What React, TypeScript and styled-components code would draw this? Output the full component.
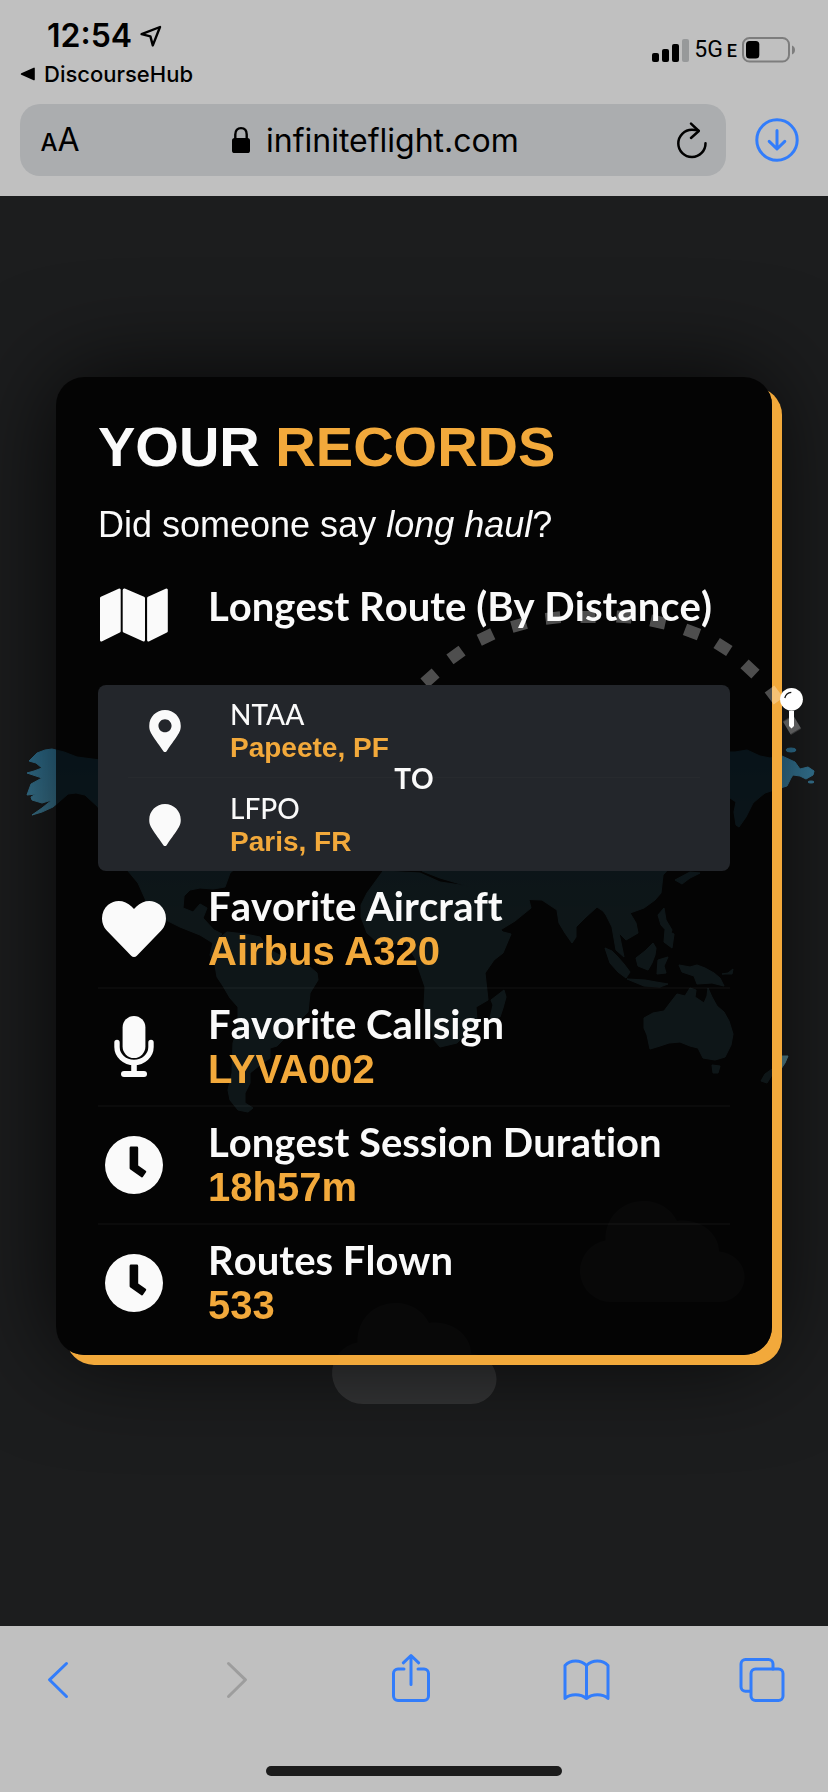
import React from "react";
import styled, { createGlobalStyle } from "styled-components";
import { FaHeart, FaMapMarker, FaMapMarkerAlt } from "react-icons/fa";

const color = {
  chrome: "#c0c0c0",
  field: "#abadaf",
  page: "#1c1d1e",
  accent: "#f2a93b",
  link: "#327dfb",
  text: "#fafafa",
  panel: "#23262b",
};

const fonts = {
  system: '"Inter", "Liberation Sans", sans-serif',
  body: '"Liberation Sans", Arial, sans-serif',
  label: '"Lato", "Liberation Sans", sans-serif',
};

const GlobalStyle = createGlobalStyle`
  *, *::before, *::after { box-sizing: border-box; }
  body {
    margin: 0;
    background: ${color.page};
    font-family: ${fonts.body};
  }
  h1, p, ul { margin: 0; padding: 0; }
  ul { list-style: none; }
  svg { display: block; flex: none; }
`;

const Page = styled.div`
  display: flex;
  flex-direction: column;
  min-height: 100vh;
`;

/* ---------- browser chrome ---------- */

const Header = styled.header`
  background: ${color.chrome};
  color: #000;
  font-family: ${fonts.system};
  padding-bottom: 20px;
`;

const StatusBar = styled.div`
  display: flex;
  justify-content: space-between;
  height: 104px;
  padding: 16px 32px 0 20px;
`;

const StatusLeft = styled.div`
  display: flex;
  flex-direction: column;
`;

const Clock = styled.div`
  display: flex;
  align-items: center;
  gap: 8px;
  padding-left: 27px;
  font-size: 32px;
  line-height: 40px;
  font-weight: 600;
`;

const BackToApp = styled.a`
  display: flex;
  align-items: center;
  gap: 8px;
  color: #000;
  font-size: 22px;
  line-height: 36px;
  font-weight: 500;
  text-decoration: none;
`;

const StatusRight = styled.div`
  display: flex;
  align-items: center;
  gap: 5px;
  height: 68px;
`;

const Network = styled.span`
  font-family: "Roboto", "Inter", sans-serif;
  font-size: 23px;
  line-height: 28px;
  font-weight: 400;
  small {
    margin-left: 4px;
    font-size: 18px;
    font-weight: 500;
  }
`;

const AddressRow = styled.div`
  display: flex;
  align-items: center;
  gap: 28px;
  padding: 0 28px 0 20px;
`;

const AddressBar = styled.div`
  display: flex;
  align-items: center;
  flex: 1;
  min-width: 0;
  height: 72px;
  padding: 0 18px 0 20px;
  border-radius: 20px;
  background: ${color.field};
`;

const PlainButton = styled.button`
  display: flex;
  align-items: center;
  justify-content: center;
  padding: 0;
  border: 0;
  background: none;
  color: inherit;
  font: inherit;
`;

const TextSizeButton = styled(PlainButton)`
  align-items: baseline;
  width: 40px;
  padding-top: 2px;
  font-size: 32px;
  line-height: 40px;
  small {
    font-size: 24px;
    font-weight: 500;
  }
`;

const Address = styled.label`
  display: flex;
  align-items: center;
  justify-content: center;
  flex: 1;
  min-width: 0;
  gap: 16px;
`;

const AddressInput = styled.input`
  width: 258px;
  padding: 2px 0 0;
  border: 0;
  outline: 0;
  background: none;
  color: #000;
  font-family: ${fonts.system};
  font-size: 32px;
  line-height: 40px;
`;

const DownloadButton = styled(PlainButton)`
  color: ${color.link};
`;

const Footer = styled.footer`
  display: flex;
  flex-direction: column;
  align-items: center;
  justify-content: space-between;
  height: 166px;
  padding: 30px 0 16px;
  background: ${color.chrome};
`;

const Toolbar = styled.nav`
  display: flex;
  justify-content: space-between;
  width: 100%;
  padding: 0 42px 0 34px;
`;

const ToolButton = styled(PlainButton)<{ $muted?: boolean }>`
  width: 48px;
  height: 48px;
  color: ${(p) => (p.$muted ? "#9d9d9d" : color.link)};
`;

const HomeIndicator = styled.div`
  width: 296px;
  height: 10px;
  border-radius: 5px;
  background: #1c1c1c;
`;

/* ---------- page content ---------- */

const Main = styled.main`
  position: relative;
  flex: 1;
  padding: 181px 56px 120px;
  overflow: hidden;
`;

const Backdrop = styled.svg`
  position: absolute;
  top: 0;
  left: 0;
  width: 100%;
  height: auto;
`;

const Card = styled.section`
  position: relative;
  padding: 40px 42px 12px;
  border-radius: 28px;
  background: rgba(0, 0, 0, 0.84);
  box-shadow: 10px 10px 0 ${color.accent}, 0 0 100px rgba(0, 0, 0, 0.8);
  color: ${color.text};
`;

const FlightPath = styled.svg`
  position: absolute;
  top: 0;
  right: -56px;
  width: 400px;
  height: 400px;
`;

const CardContent = styled.div`
  position: relative;
`;

const Title = styled.h1`
  font-size: 56px;
  line-height: 60px;
  font-weight: 700;
`;

const Accent = styled.span`
  color: ${color.accent};
`;

const Subtitle = styled.p`
  margin-top: 28px;
  font-size: 36px;
  line-height: 40px;
`;

const RouteHeading = styled.div`
  display: flex;
  gap: 38px;
  height: 100px;
  margin-top: 40px;
`;

const IconBox = styled.div<{ $width?: number }>`
  display: flex;
  align-items: center;
  justify-content: center;
  flex: none;
  width: ${(p) => p.$width ?? 72}px;
`;

const RouteIcon = styled(IconBox)`
  align-items: flex-start;
  padding-top: 3px;
`;

const Label = styled.div`
  margin-bottom: 2px;
  font-family: ${fonts.label};
  font-size: 40px;
  line-height: 42px;
  font-weight: 700;
  font-kerning: none;
  font-variant-ligatures: none;
`;

const Value = styled.div`
  color: ${color.accent};
  font-size: 40px;
  line-height: 44px;
  font-weight: 700;
`;

const RoutePanel = styled.div`
  position: relative;
  padding: 0 30px;
  border-radius: 8px;
  background: ${color.panel};
`;

const Airport = styled.div<{ $divided?: boolean }>`
  display: flex;
  align-items: center;
  gap: 28px;
  height: 93px;
  border-bottom: ${(p) => (p.$divided ? "1px solid #272a2e" : "0")};
`;

const AirportCode = styled.div`
  margin-bottom: 2px;
  font-family: ${fonts.label};
  font-size: 28px;
  line-height: 32px;
  font-weight: 500;
`;

const AirportCity = styled.div`
  color: ${color.accent};
  font-size: 28px;
  line-height: 32px;
  font-weight: 700;
`;

const To = styled.div`
  position: absolute;
  top: 50%;
  left: 50%;
  transform: translate(-50%, -50%);
  padding: 0 4px;
  font-family: ${fonts.label};
  font-size: 28px;
  line-height: 32px;
  font-weight: 700;
  font-kerning: none;
`;

const RecordRow = styled.li`
  display: flex;
  align-items: center;
  gap: 38px;
  height: 118px;
  border-bottom: 2px solid rgba(255, 255, 255, 0.03);
  &:last-child { border-bottom-color: transparent; }
`;

/* ---------- drawings ---------- */

const LocationArrow = () => (
  <svg width="22" height="22" viewBox="0 0 22 22" fill="none" stroke="#000" strokeWidth="2.4" strokeLinejoin="round" aria-hidden="true">
    <path d="M1.6 9.2 20 2 12.8 20.4 10.4 11.4Z" />
  </svg>
);

const Triangle = () => (
  <svg width="16" height="14" viewBox="0 0 16 14" aria-hidden="true">
    <path d="M1.6 7 14 1.4V12.600Z" stroke="#000" strokeWidth="1.600" strokeLinejoin="round" />
  </svg>
);

const Signal = () => (
  <svg width="37" height="23" viewBox="0 0 37 23" role="img" aria-label="Signal strength">
    <rect x="0" y="14" width="7" height="9" rx="2" />
    <rect x="10" y="10" width="7" height="13" rx="2" />
    <rect x="20" y="5" width="7" height="18" rx="2" />
    <rect x="30" y="0" width="7" height="23" rx="2" fill="#97999a" />
  </svg>
);

const Battery = () => (
  <svg width="54" height="26" viewBox="0 0 54 26" role="img" aria-label="Battery">
    <rect x="1" y="1" width="46" height="23.500" rx="6.500" fill="none" stroke="#7d7d7d" strokeWidth="2" />
    <rect x="4" y="4" width="13.300" height="17.500" rx="3.500" />
    <path d="M50 8.500c4 1.500 4 7.500 0 9z" fill="#7d7d7d" />
  </svg>
);

const Lock = () => (
  <svg width="18" height="28" viewBox="0 0 18 28" aria-hidden="true">
    <path d="M3.300 14V8.500C3.300 4.500 5.500 2.100 9 2.100s5.700 2.400 5.700 6.400V14" fill="none" stroke="#000" strokeWidth="2.400" />
    <rect x="0" y="12" width="18" height="15" rx="2.600" />
  </svg>
);

const Reload = () => (
  <svg width="32" height="38" viewBox="0 0 32 38" fill="none" stroke="#000" strokeWidth="2.500" strokeLinecap="round" strokeLinejoin="round" aria-hidden="true">
    <path d="M29.500 22.200a13.600 13.600 0 1 1-13.600-13.400c2.200 0 4.600.2 6.500.9" />
    <path d="M15 2.600 22.800 10 15 17" />
  </svg>
);

const Download = () => (
  <svg width="46" height="46" viewBox="0 0 46 46" fill="none" stroke="currentColor" strokeWidth="3" strokeLinecap="round" strokeLinejoin="round" aria-hidden="true">
    <circle cx="23" cy="23" r="20.200" />
    <path d="M23 13.500v18M15.200 24.400 23 32l7.800-7.600" />
  </svg>
);

const toolIcon = {
  width: 48,
  height: 48,
  viewBox: "0 0 48 48",
  fill: "none",
  stroke: "currentColor",
  strokeWidth: 3,
  strokeLinecap: "round" as const,
  strokeLinejoin: "round" as const,
  overflow: "visible",
  "aria-hidden": true,
};

const Back = () => (
  <svg {...toolIcon}><path d="M32.500 7.500 15.500 23.800 32.500 40.500" /></svg>
);
const Forward = () => (
  <svg {...toolIcon}><path d="M18.500 7.500 35.500 23.800 18.500 40.500" /></svg>
);
const Share = () => (
  <svg {...toolIcon}>
    <path d="M18 13H12A4.500 4.500 0 0 0 7.500 17.500v22.500A4.500 4.500 0 0 0 12 44.500h26a4.500 4.500 0 0 0 4.500-4.500V17.500A4.500 4.500 0 0 0 38 13h-6" />
    <path d="M25 28.500V-.5M17.300 6.800 25-.5l7.700 7.300" />
  </svg>
);
const Book = () => (
  <svg {...toolIcon}>
    <path d="M24.500 9.500C18.500 3.600 8.500 3.600 3 9.500v33C8.500 37.600 18.500 37.600 24.500 42.500c6-4.900 16-4.900 21.500 0v-33C40.500 3.600 30.500 3.600 24.500 9.500v33" />
  </svg>
);
const Tabs = () => (
  <svg {...toolIcon}>
    <path d="M12 35.200H7.500A4.500 4.500 0 0 1 3 30.700V8a4.500 4.500 0 0 1 4.500-4.500h23A4.500 4.500 0 0 1 35 8v5" />
    <rect x="13" y="13" width="32" height="31.500" rx="4.500" />
  </svg>
);

const MapIcon = () => (
  <svg width="68" height="54" viewBox="0 0 68 54" fill="currentColor" stroke="currentColor" strokeWidth="3" strokeLinejoin="round" aria-hidden="true">
    <path d="M1.500 10.200 19.200 2V43.200L1.500 52Z" />
    <path d="M24.200 2 43.500 10.200V52L24.200 43.200Z" />
    <path d="M48.600 10.200 66.300 2V43.200L48.600 52Z" />
  </svg>
);

const MicIcon = () => (
  <svg width="40" height="62" viewBox="0 0 40 62" fill="none" stroke="currentColor" aria-hidden="true">
    <rect x="8.600" y="0" width="22.800" height="42" rx="11.400" fill="currentColor" stroke="none" />
    <path d="M3 26.500v4.500a17 15.500 0 0 0 34 0v-4.500" strokeWidth="5.400" strokeLinecap="round" />
    <path d="M20 47v10" strokeWidth="5.600" />
    <path d="M10 58h20" strokeWidth="6" strokeLinecap="round" />
  </svg>
);

const ClockIcon = () => (
  <svg width="58" height="58" viewBox="0 0 58 58" fill="currentColor" aria-hidden="true">
    <path
      fillRule="evenodd"
      d="M29 0a29 29 0 1 1 0 58 29 29 0 0 1 0-58ZM26 10.600q-1.400 0-1.400 1.400V32q0 1 .8 1.500l11 7.700q.8.500 1.400-.2l3.300-4.700q.5-1-.4-1.600L33.200 29.500V12q0-1.400-1.400-1.400Z"
    />
  </svg>
);

const Cloud = ({ x, y }: { x: number; y: number }) => (
  <g transform={`translate(${x} ${y})`} fill="#fff" opacity="0.11">
    <path d="M31 101A31 31 0 0 1 25.500 39.500C25 16 42 0 64 0 79 0 91 8 97 20 119 17 139 32 139 50.500 154 52 164.500 63 164.500 76 164.500 90 153 101 139 101Z" />
  </g>
);

const WorldMap = () => (
  <Backdrop viewBox="0 196 828 1430" aria-hidden="true">
    <defs>
      <linearGradient id="land" gradientUnits="userSpaceOnUse" x1="0" y1="750" x2="0" y2="930">
        <stop offset="0" stopColor="#31779a" />
        <stop offset="1" stopColor="#5b8c98" />
      </linearGradient>
    </defs>
    <g fill="url(#land)" stroke="url(#land)" strokeWidth="1" strokeLinejoin="round">
      <path d="M27 773 34 771 42 768 36 763 29 761 37 753 45 750 52 749 64 752 77 757 100 760 180 752 270 760 290 800 270 840 230 873 225 887 213 889 200 888 190 890 184 896 183 908 193 912 200 904 207 908 203 918 214 930 222 934 213 943 200 935 180 927 160 917 147 903 138 883 128 871 105 825 98 807 85 795 76 793 68 794 60 801 53 807 42 812 32 815 42 808 52 800 42 803 32 800 31 797 36 794 27 795 31 784 42 778Z" />
      <path d="M213 943 227 932 245 934 260 937 270 950 297 964 310 967 317 973 318 980 310 993 308 1012 300 1020 290 1030 284 1039 277 1046 270 1048 270 1058 260 1065 250 1073 250 1083 245 1093 245 1103 253 1108 248 1112 238 1110 230 1100 228 1090 232 1073 233 1043 238 1027 238 1007 230 998 223 986 217 977 215 965 210 955Z" />
      <path d="M383 871 375 882 367 893 361 905 361 917 367 933 375 940 383 945 405 942 415 958 425 987 424 1007 431 1027 434 1040 440 1047 457 1043 468 1032 477 1020 476 1007 488 1000 485 973 494 960 503 953 511 934 503 932 494 923 484 904 474 887 440 882 420 873Z" />
      <path d="M504 990 506 997 503 1008 500 1017 490 1018 493 1005 491 1000Z" />
      <path d="M474 888 484 904 494 923 497 932 515 921 531 908 529 900 512 893 504 885 507 891 517 899 542 900 557 910 559 923 565 933 572 943 576 937 576 927 586 917 597 907 603 911 606 915 612 927 616 950 624 957 619 933 626 940 638 933 636 923 630 913 644 908 655 900 661 893 663 875 690 845 700 810 730 798 736 802 734 812 736 825 739 827 746 817 753 803 760 797 765 793 774 790 787 786 791 778 793 775 800 776 806 779 813 775 814 771 808 767 800 769 795 762 782 756 770 758 760 756 747 750 735 752 720 752 640 745 520 755 440 790 400 830 422 871 440 878Z" />
      <ellipse cx="791" cy="750" rx="5" ry="2" />
      <ellipse cx="811" cy="782" rx="3" ry="1" />
      <path d="M658 915 664 908 666 920 672 930 670 935 661 925ZM675 880 690 872 700 873 690 878 682 884ZM665 930 674 934 672 948 664 942Z" />
      <path d="M605 948 612 951 617 956 624 964 630 972 626 978 618 972 610 963ZM636 958 645 951 653 943 656 948 655 955 652 963 648 970 638 966ZM627 979 645 980 656 982 668 984 660 987 644 986ZM658 960 668 957 664 966 666 973 657 974Z" />
      <path d="M679 965 690 967 697 965 705 968 714 973 720 978 724 986 712 983 697 984 694 976 682 972ZM722 974 728 973 733 969 732 974Z" />
      <path d="M644 1018 653 1013 664 1011 670 1003 677 994 685 996 690 988 696 990 695 997 704 1003 707 996 708 988 712 997 717 1006 724 1012 729 1021 733 1034 731 1045 725 1057 715 1060 703 1058 698 1048 690 1046 680 1042 669 1043 660 1046 650 1049 647 1035 644 1028ZM712 1065 720 1066 718 1073 713 1073Z" />
      <path d="M781 1056 788 1056 785 1063 781 1069 772 1075 767 1083 761 1081 765 1074 775 1067Z" />
    </g>
    <Cloud x={580} y={1201} />
    <Cloud x={332} y={1303} />
  </Backdrop>
);

const pathPoints: [number, number][] = [
  [430, 678], [456, 655], [486, 637], [519, 625], [553, 618], [588, 617],
  [624, 617], [658, 622], [692, 632], [723, 647], [750, 669], [774, 695], [792, 725],
];

const FlightArc = () => (
  <FlightPath viewBox="428 377 400 400" overflow="visible" aria-hidden="true">
    <g fill="#fff" opacity="0.3">
      {pathPoints.map(([x, y], i) => {
        const [ax, ay] = pathPoints[Math.max(i - 1, 0)];
        const [bx, by] = pathPoints[Math.min(i + 1, pathPoints.length - 1)];
        const angle = (Math.atan2(by - ay, bx - ax) * 180) / Math.PI;
        return (
          <rect key={x} x={x - 7.5} y={y - 6} width="15" height="12" transform={`rotate(${angle} ${x} ${y})`} />
        );
      })}
    </g>
    <path d="M789 711h5v15l-2.500 2.500-2.500-2.500Z" fill="#fff" />
    <circle cx="791.500" cy="699.300" r="11.400" fill="#fff" />
    <path d="M784.800 698a7.500 7.500 0 0 1 6.500-5.700" fill="none" stroke="#111" strokeWidth="1.300" />
  </FlightPath>
);

const records = [
  { label: "Favorite Aircraft", value: "Airbus A320", icon: <FaHeart size={64} /> },
  { label: "Favorite Callsign", value: "LYVA002", icon: <MicIcon /> },
  { label: "Longest Session Duration", value: "18h57m", icon: <ClockIcon /> },
  { label: "Routes Flown", value: "533", icon: <ClockIcon /> },
];

export default function App() {
  return (
    <Page>
      <GlobalStyle />
      <Header>
        <StatusBar>
          <StatusLeft>
            <Clock>12:54 <LocationArrow /></Clock>
            <BackToApp href="#discoursehub"><Triangle />DiscourseHub</BackToApp>
          </StatusLeft>
          <StatusRight>
            <Signal />
            <Network>5G<small>E</small></Network>
            <Battery />
          </StatusRight>
        </StatusBar>
        <AddressRow>
          <AddressBar>
            <TextSizeButton type="button" aria-label="Text size"><small>A</small>A</TextSizeButton>
            <Address>
              <Lock />
              <AddressInput type="text" aria-label="Address" defaultValue="infiniteflight.com" />
            </Address>
            <PlainButton type="button" aria-label="Reload"><Reload /></PlainButton>
          </AddressBar>
          <DownloadButton type="button" aria-label="Downloads"><Download /></DownloadButton>
        </AddressRow>
      </Header>

      <Main>
        <WorldMap />
        <Card>
          <FlightArc />
          <CardContent>
            <Title>YOUR <Accent>RECORDS</Accent></Title>
            <Subtitle>Did someone say <em>long haul</em>?</Subtitle>
            <RouteHeading>
              <RouteIcon><MapIcon /></RouteIcon>
              <Label>Longest Route (By Distance)</Label>
            </RouteHeading>
            <RoutePanel>
              <Airport $divided>
                <IconBox $width={74}><FaMapMarkerAlt size={42} /></IconBox>
                <div>
                  <AirportCode>NTAA</AirportCode>
                  <AirportCity>Papeete, PF</AirportCity>
                </div>
              </Airport>
              <Airport>
                <IconBox $width={74}><FaMapMarker size={42} /></IconBox>
                <div>
                  <AirportCode>LFPO</AirportCode>
                  <AirportCity>Paris, FR</AirportCity>
                </div>
              </Airport>
              <To>TO</To>
            </RoutePanel>
            <ul>
              {records.map((record) => (
                <RecordRow key={record.label}>
                  <IconBox>{record.icon}</IconBox>
                  <div>
                    <Label>{record.label}</Label>
                    <Value>{record.value}</Value>
                  </div>
                </RecordRow>
              ))}
            </ul>
          </CardContent>
        </Card>
      </Main>

      <Footer>
        <Toolbar aria-label="Browser">
          <ToolButton type="button" aria-label="Back"><Back /></ToolButton>
          <ToolButton type="button" aria-label="Forward" $muted><Forward /></ToolButton>
          <ToolButton type="button" aria-label="Share"><Share /></ToolButton>
          <ToolButton type="button" aria-label="Bookmarks"><Book /></ToolButton>
          <ToolButton type="button" aria-label="Tabs"><Tabs /></ToolButton>
        </Toolbar>
        <HomeIndicator />
      </Footer>
    </Page>
  );
}
